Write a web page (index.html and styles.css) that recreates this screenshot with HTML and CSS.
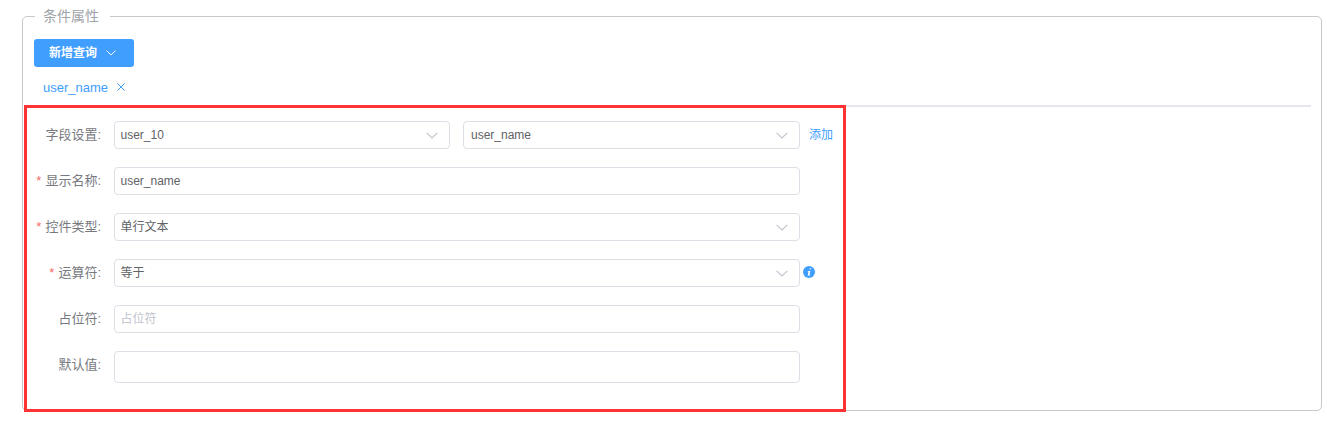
FILE: index.html
```html
<!DOCTYPE html>
<html lang="zh">
<head>
<meta charset="utf-8">
<title>条件属性</title>
<link rel="stylesheet" href="styles.css">
</head>
<body>
<fieldset class="panel">
  <legend class="panel-title">条件属性</legend>
  <div class="toolbar">
    <button class="add-btn" type="button"><span class="cjk">新增查询</span>
      <svg class="btn-arrow" viewBox="0 0 10 6" width="10" height="6"><path d="M.5.6 5 5 9.5.6" fill="none" stroke="#fff" stroke-width="1"/></svg>
    </button>
  </div>
  <div class="tabs">
    <span class="tab">user_name</span>
    <svg class="tab-close" viewBox="0 0 8 8" width="8" height="8"><path d="M.4.4 7.6 7.6M7.6.4.4 7.6" fill="none" stroke="#409eff" stroke-width="1"/></svg>
  </div>
  <form class="form-box">
    <div class="row">
      <label class="label">字段设置:</label>
      <div class="control split">
        <div class="input"><span>user_10</span><svg class="arrow" viewBox="0 0 12 7" width="12" height="7"><path d="M.6.8 6 6 11.4.8" fill="none" stroke="#c0c4cc" stroke-width="1.1"/></svg></div>
        <div class="input second"><span>user_name</span><svg class="arrow" viewBox="0 0 12 7" width="12" height="7"><path d="M.6.8 6 6 11.4.8" fill="none" stroke="#c0c4cc" stroke-width="1.1"/></svg></div>
      </div>
      <a class="add-link">添加</a>
    </div>
    <div class="row">
      <label class="label"><i class="req">*</i>显示名称:</label>
      <div class="control"><div class="input"><span>user_name</span></div></div>
    </div>
    <div class="row">
      <label class="label"><i class="req">*</i>控件类型:</label>
      <div class="control"><div class="input"><span class="cjk">单行文本</span><svg class="arrow" viewBox="0 0 12 7" width="12" height="7"><path d="M.6.8 6 6 11.4.8" fill="none" stroke="#c0c4cc" stroke-width="1.1"/></svg></div></div>
    </div>
    <div class="row">
      <label class="label"><i class="req">*</i>运算符:</label>
      <div class="control"><div class="input"><span class="cjk">等于</span><svg class="arrow" viewBox="0 0 12 7" width="12" height="7"><path d="M.6.8 6 6 11.4.8" fill="none" stroke="#c0c4cc" stroke-width="1.1"/></svg></div></div>
      <svg class="info" viewBox="0 0 12 12" width="12" height="12"><circle cx="6" cy="6" r="6" fill="#409eff"/><path d="M6.9 2.3h1.2l-.3 1.3H6.6zM5 4.9h2.3L6.5 8.7h.8l-.2.9H4.7l.8-3.8h-.7z" fill="#fff"/></svg>
    </div>
    <div class="row">
      <label class="label">占位符:</label>
      <div class="control"><div class="input"><span class="placeholder cjk">占位符</span></div></div>
    </div>
    <div class="row">
      <label class="label">默认值:</label>
      <div class="control"><div class="input tall"></div></div>
    </div>
  </form>
</fieldset>
</body>
</html>
```
FILE: styles.css
```css
* { box-sizing: border-box; }
html, body { margin: 0; padding: 0; background: #fff; }
body {
  height: 423px;
  overflow: hidden;
  padding: 7px 5px 0 22px;
  font-family: "Liberation Sans", "Noto Sans CJK SC", sans-serif;
  font-size: 12px;
  color: #606266;
}
.panel {
  margin: 0;
  min-width: 0;
  height: 404px;
  padding: 0 10px 0 1px;
  border: 1px solid #c8c8c8;
  border-radius: 5px;
}
.panel-title {
  margin-left: 11px;
  padding: 0 11px 0 8px;
  font-size: 14px;
  line-height: 18px;
  color: #a0a3a8;
}
.toolbar { padding: 14px 0 0 10px; }
.add-btn {
  display: flex;
  align-items: center;
  width: 100px;
  height: 28px;
  padding: 0 0 0 15px;
  border: 0;
  border-radius: 3px;
  background: #409eff;
  color: #fff;
  font: bold 12px "Liberation Sans", "Noto Sans CJK SC", sans-serif;
}
.btn-arrow { margin-left: 9px; }
.cjk { margin-bottom: 3px; }
.tabs {
  display: flex;
  align-items: center;
  height: 40px;
  padding: 2px 0 0 19px;
  border-bottom: 2px solid #e4e7ed;
  color: #409eff;
}
.tab { font-size: 13px; }
.tab-close { margin-left: 9px; }
.form-box {
  width: 822px;
  height: 307px;
  margin-top: -2px;
  padding: 13px 0 0;
  border: 3px solid #f33;
  position: relative;
}
.row {
  display: flex;
  align-items: flex-start;
  margin-bottom: 18px;
}
.label {
  width: 74px;
  margin-right: 13px;
  line-height: 27px;
  text-align: right;
  white-space: nowrap;
  font-size: 13px;
  color: #77797e;
}
.req {
  margin-right: 4px;
  color: #f56c6c;
  font-style: normal;
}
.control { width: 686px; }
.split {
  display: grid;
  grid-template-columns: 336px 337px;
  column-gap: 13px;
}
.input {
  display: flex;
  align-items: center;
  justify-content: space-between;
  height: 28px;
  padding: 0 11px 0 5.5px;
  border: 1px solid #dcdfe6;
  border-radius: 4px;
  background: #fff;
  color: #606266;
}
.second { padding-left: 7px; }
.tall { height: 32px; }
.placeholder { color: #c0c4cc; }
.add-link { margin-left: 9px; line-height: 28px; color: #409eff; }
.info { margin: 7px 0 0 3px; }
```
